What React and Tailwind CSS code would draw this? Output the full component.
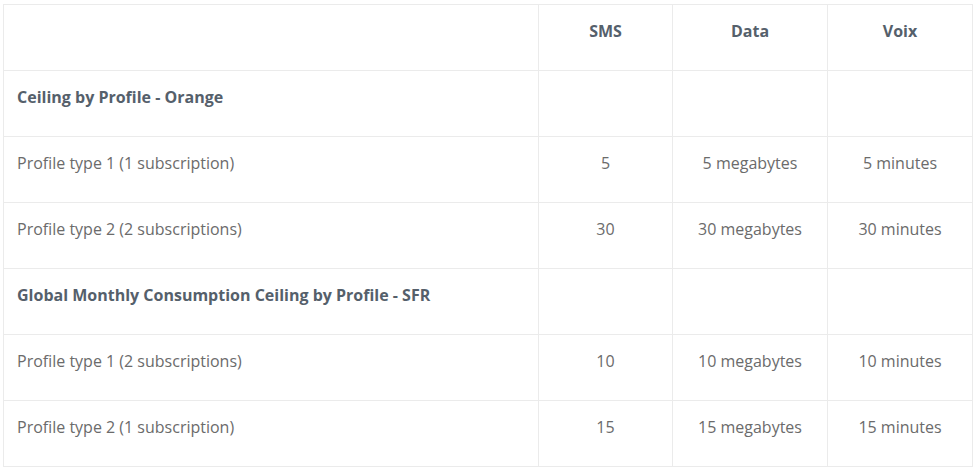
export default function App() {
  const rows = [
    { label: "Ceiling by Profile - Orange", bold: true },
    { label: "Profile type 1 (1 subscription)", v: ["5", "5 megabytes", "5 minutes"] },
    { label: "Profile type 2 (2 subscriptions)", v: ["30", "30 megabytes", "30 minutes"] },
    { label: "Global Monthly Consumption Ceiling by Profile - SFR", bold: true },
    { label: "Profile type 1 (2 subscriptions)", v: ["10", "10 megabytes", "10 minutes"] },
    { label: "Profile type 2 (1 subscription)", v: ["15", "15 megabytes", "15 minutes"] },
  ];
  const cell = "border border-[#ebebeb] h-[66px] align-top pt-[14px] px-[13px] text-[16px] leading-[24px]";
  return (
    <div className="bg-white w-[978px] h-[473px] pt-[4px] pl-[3px]" style={{ fontFamily: '"Open Sans", sans-serif' }}>
      <table className="table-fixed border-collapse w-[969px]">
        <colgroup>
          <col className="w-[535px]" />
          <col className="w-[134px]" />
          <col className="w-[155px]" />
          <col className="w-[145px]" />
        </colgroup>
        <thead>
          <tr>
            <th className={cell}></th>
            <th className={`${cell} text-center font-bold text-[#55606b]`}>SMS</th>
            <th className={`${cell} text-center font-bold text-[#55606b]`}>Data</th>
            <th className={`${cell} text-center font-bold text-[#55606b]`}>Voix</th>
          </tr>
        </thead>
        <tbody>
          {rows.map((r, i) => (
            <tr key={i}>
              <td className={`${cell} text-left ${r.bold ? "font-bold text-[#55606b]" : "text-[#6b6b6b]"}`}>{r.label}</td>
              {[0, 1, 2].map((j) => (
                <td key={j} className={`${cell} text-center text-[#6b6b6b]`}>{r.v ? r.v[j] : ""}</td>
              ))}
            </tr>
          ))}
        </tbody>
      </table>
    </div>
  );
}
